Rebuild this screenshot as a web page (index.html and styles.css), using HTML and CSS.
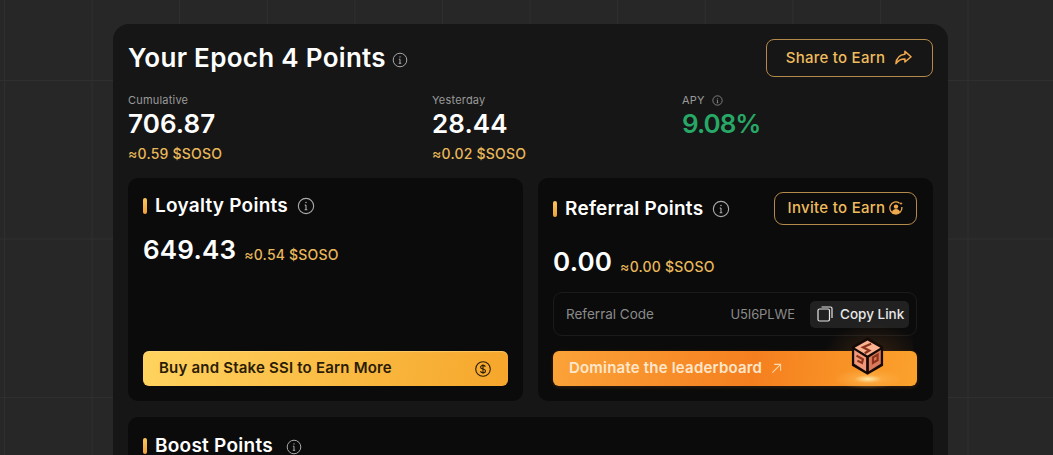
FILE: index.html
```html
<!DOCTYPE html>
<html lang="en">
<head>
<meta charset="utf-8">
<title>Epoch 4 Points</title>
<link rel="stylesheet" href="styles.css">
</head>
<body>
<main class="card">
  <header class="head">
    <div class="title-row">
      <h1 class="title">Your Epoch 4 Points</h1>
      <svg class="info info-16" viewBox="0 0 16 16"><circle cx="8" cy="8" r="6.800"/><path d="M8 7.200v4M6.800 11.300h2.400M6.900 7.200H8"/><circle class="dot" cx="8" cy="4.900" r=".7"/></svg>
    </div>
    <button class="btn-outline btn-share">Share to Earn
      <svg class="share-icon" viewBox="0 0 20 18"><path d="M11.500 2.500 18 8.200l-6.500 5.600v-3.200C7.500 10.400 4.500 12 2 15.500 2.500 10 6 6.200 11.500 5.600z"/></svg>
    </button>
  </header>

  <section class="stats">
    <div class="stat">
      <div class="stat-label">Cumulative</div>
      <div class="stat-value">706.87</div>
      <div class="soso">≈0.59 $SOSO</div>
    </div>
    <div class="stat">
      <div class="stat-label">Yesterday</div>
      <div class="stat-value">28.44</div>
      <div class="soso">≈0.02 $SOSO</div>
    </div>
    <div class="stat">
      <div class="stat-label">APY
        <svg class="info info-11" viewBox="0 0 16 16"><circle cx="8" cy="8" r="6.800"/><path d="M8 7.200v4M6.800 11.300h2.400M6.900 7.200H8"/><circle class="dot" cx="8" cy="4.900" r=".7"/></svg>
      </div>
      <div class="stat-value green">9.08%</div>
    </div>
  </section>

  <section class="panels">
    <article class="panel">
      <div class="panel-head panel-head-short">
        <span class="bar"></span>
        <h2 class="panel-title">Loyalty Points</h2>
        <svg class="info info-17" viewBox="0 0 16 16"><circle cx="8" cy="8" r="6.800"/><path d="M8 7.200v4M6.800 11.300h2.400M6.900 7.200H8"/><circle class="dot" cx="8" cy="4.900" r=".7"/></svg>
      </div>
      <div class="amount-row amount-loyalty">
        <span class="amount">649.43</span><span class="soso">≈0.54 $SOSO</span>
      </div>
      <button class="cta cta-yellow"><span class="cta-label">Buy and Stake SSI to Earn More</span>
        <svg class="coin" viewBox="0 0 18 18"><circle cx="9" cy="9" r="7.300"/><path d="M11.400 6.600C10.800 5.700 9.900 5.400 9 5.400c-1.300 0-2.400.6-2.400 1.800 0 2.500 4.900 1.200 4.900 3.700 0 1.200-1.200 1.800-2.500 1.800-1 0-2-.4-2.600-1.300M9 4.200v9.600"/></svg>
      </button>
    </article>

    <article class="panel panel-referral">
      <div class="panel-head panel-head-tall">
        <span class="bar"></span>
        <h2 class="panel-title">Referral Points</h2>
        <svg class="info info-17" viewBox="0 0 16 16"><circle cx="8" cy="8" r="6.800"/><path d="M8 7.200v4M6.800 11.300h2.400M6.900 7.200H8"/><circle class="dot" cx="8" cy="4.900" r=".7"/></svg>
        <button class="btn-outline btn-invite">Invite to Earn
          <svg class="invite-icon" viewBox="0 0 14 14"><path class="ring" d="M10.500 2.200A6 6 0 1 0 12.800 6"/><circle class="fill" cx="7" cy="5.600" r="2.200"/><path class="fill" d="M2.900 11c.6-2 2.300-3 4.100-3s3.500 1 4.100 3c-1 1.200-2.500 1.900-4.100 1.900S3.900 12.200 2.900 11z"/><path class="fill" d="M12 .8l.5 1.200 1.200.5-1.200.5-.5 1.200-.5-1.200-1.200-.5 1.200-.5z"/></svg>
        </button>
      </div>
      <div class="amount-row amount-referral">
        <span class="amount">0.00</span><span class="soso">≈0.00 $SOSO</span>
      </div>
      <div class="code-box">
        <span class="code-label">Referral Code</span>
        <span class="code-value">U5I6PLWE</span>
        <button class="copy">
          <svg class="copy-icon" viewBox="0 0 16 16"><rect x="1" y="3" width="11.500" height="12" rx="1.500"/><path d="M4.500 1h9a1.500 1.500 0 0 1 1.500 1.500V12"/></svg>
          Copy Link
        </button>
      </div>
      <div class="cta-wrap">
        <button class="cta cta-orange"><span class="cta-label">Dominate the leaderboard</span>
          <svg class="arrow" viewBox="0 0 12 12"><path d="M1.500 10.500 10.500 1.500M3.500 1.500h7v7"/></svg>
        </button>
        <span class="halo"></span>
        <span class="glow"></span>
        <svg class="cube" viewBox="0 0 36 42">
          <polygon class="cube-edge" points="18,0 35,10 35,31 18,41 1,31 1,10"/>
          <polygon class="cube-top" points="18,3.500 32,11.500 18,20 4,11.500"/>
          <polygon class="cube-left" points="3.500,14 16.500,22 16.500,37 3.500,29"/>
          <polygon class="cube-right" points="32.500,14 19.500,22 19.500,37 32.500,29"/>
          <path class="cube-mark" d="M22 7 13 11l7 3.500-5 3M6 20l7 4-1 4-5-2.500M24 22l5-3v6l-5 3z"/>
        </svg>
      </div>
    </article>
  </section>

  <section class="panel panel-wide">
    <div class="panel-head panel-head-short">
      <span class="bar"></span>
      <h2 class="panel-title">Boost Points</h2>
      <svg class="info info-16 boost-info" viewBox="0 0 16 16"><circle cx="8" cy="8" r="6.800"/><path d="M8 7.200v4M6.800 11.300h2.400M6.900 7.200H8"/><circle class="dot" cx="8" cy="4.900" r=".7"/></svg>
    </div>
  </section>
</main>
</body>
</html>
```

FILE: styles.css
```css
* { box-sizing: border-box; }

html, body { margin: 0; height: 455px; overflow: hidden; }

body {
  padding: 24px 105px 0 113px;
  background-color: #272727;
  background-image:
    linear-gradient(to right, #2f2f2f 1px, transparent 1px),
    linear-gradient(to bottom, #2f2f2f 1px, transparent 1px);
  background-size: 87.6px 158.5px;
  background-position: 4px 80px;
  font-family: Inter, "Liberation Sans", sans-serif;
  color: #fff;
}

.card {
  width: 835px;
  height: 431px;
  overflow: hidden;
  padding: 15px;
  background: #161616;
  border-radius: 16px 16px 0 0;
}

h1, h2 { margin: 0; }

button { font-family: inherit; cursor: pointer; }

.head {
  display: flex;
  justify-content: space-between;
  align-items: flex-start;
  height: 54px;
}

.title-row {
  display: flex;
  align-items: center;
  gap: 6px;
  height: 38px;
}

.title {
  font-size: 26px;
  line-height: 38px;
  font-weight: 600;
  letter-spacing: 0.3px;
}

.info {
  flex: none;
  fill: none;
  stroke: #a8a8a8;
  stroke-width: 1;
}
.info .dot { fill: #a8a8a8; stroke: none; }
.info-16 { width: 16px; height: 16px; margin-top: 3px; }
.info-17 { width: 18px; height: 18px; margin-left: 9px; }
.info-11 { width: 11px; height: 11px; margin-left: 4px; vertical-align: -2px; }
.boost-info { margin-left: 13px; margin-top: 1px; }

.btn-outline {
  display: flex;
  align-items: center;
  justify-content: center;
  padding: 0 0 2px;
  background: transparent;
  border: 1px solid #b5894a;
  color: #efbd5e;
  font-weight: 500;
}

.btn-share {
  width: 167px;
  height: 38px;
  gap: 9px;
  border-radius: 8px;
  font-size: 15px;
  letter-spacing: 0.25px;
}

.share-icon {
  width: 19px;
  height: 17px;
  fill: none;
  stroke: #f0a94d;
  stroke-width: 1.600;
  stroke-linejoin: round;
}

.stats {
  display: grid;
  grid-template-columns: 304px 250px 1fr;
  height: 85px;
}

.stat-label {
  font-size: 11px;
  line-height: 15px;
  color: #9a9a9a;
  letter-spacing: 0.2px;
}

.stat-value {
  font-size: 26px;
  line-height: 31px;
  font-weight: 600;
  letter-spacing: 0.1px;
}
.green { color: #27a866; letter-spacing: -1px; }

.soso {
  font-size: 14px;
  line-height: 20px;
  font-weight: 500;
  color: #e9b85a;
  margin-top: 5px;
  letter-spacing: 0.2px;
}

.panels {
  display: grid;
  grid-template-columns: 395px 395px;
  gap: 15px;
  height: 223px;
}

.panel {
  display: flex;
  flex-direction: column;
  background: #0b0b0b;
  border-radius: 10px;
  padding: 15px;
}

.panel-referral { padding-right: 16px; }

.panel-wide { margin-top: 16px; height: 120px; padding-top: 16px; }

.panel-head {
  display: flex;
  align-items: center;
}
.panel-head-short { height: 26px; }
.panel-head-tall { height: 33px; margin-top: -1px; }

.bar {
  width: 4px;
  height: 16px;
  margin-right: 8px;
  border-radius: 2px;
  background: linear-gradient(#f9c65b, #f0a03a);
}

.panel-title {
  font-size: 19px;
  line-height: 26px;
  font-weight: 600;
  letter-spacing: 0.25px;
}

.btn-invite {
  margin-left: auto;
  width: 143px;
  height: 33px;
  gap: 4px;
  border-radius: 9px;
  font-size: 15px;
  letter-spacing: 0.3px;
}

.invite-icon { width: 14px; height: 14px; }
.invite-icon .ring { fill: none; stroke: #f0a94d; stroke-width: 1.300; }
.invite-icon .fill { fill: #f0a94d; }

.amount-row {
  display: flex;
  align-items: flex-start;
  gap: 8px;
}
.amount-loyalty { margin-top: 15px; }
.amount-referral { margin-top: 21px; }
.amount-row .soso { margin-top: 11px; }

.amount {
  font-size: 26px;
  line-height: 32px;
  font-weight: 600;
  letter-spacing: 0.2px;
}

.cta {
  display: flex;
  align-items: center;
  width: 100%;
  height: 35px;
  padding: 0 16px;
  border: 0;
  border-radius: 6px;
  font-size: 15px;
  font-weight: 600;
  letter-spacing: 0.2px;
}

.cta-label { position: relative; top: -1px; }

.cta-yellow {
  margin-top: auto;
  justify-content: space-between;
  background: linear-gradient(100deg, #ffd35f, #f6a62b);
  color: #2a1c05;
  box-shadow: inset 0 1px 1px rgba(255, 225, 150, .5);
}

.coin {
  width: 18px;
  height: 18px;
  fill: none;
  stroke: #2a1c05;
  stroke-width: 1.100;
}

.code-box {
  display: flex;
  align-items: center;
  height: 44px;
  margin-top: 14px;
  padding: 0 7px 0 12px;
  border: 1px solid #1b1b1b;
  border-radius: 9px;
  font-size: 13.500px;
  color: #8a8a8a;
}

.code-value { margin-left: auto; margin-right: 15px; font-size: 13px; letter-spacing: -0.1px; }

.copy {
  display: flex;
  align-items: center;
  gap: 7px;
  width: 99px;
  height: 27px;
  padding: 0 0 0 7px;
  border: 0;
  border-radius: 5px;
  background: #212121;
  color: #e8e8e8;
  font-size: 13.500px;
  font-weight: 500;
  white-space: nowrap;
}

.copy-icon {
  flex: none;
  width: 16px;
  height: 16px;
  fill: none;
  stroke: #e8e8e8;
  stroke-width: 1.200;
}

.cta-wrap { position: relative; margin-top: 15px; }

.cta-orange {
  gap: 9px;
  background: linear-gradient(100deg, #fba338, #f57f1f 55%, #fba22c);
  color: #ffe7cc;
  box-shadow: 0 1px 4px rgba(255, 140, 40, .18);
}

.arrow {
  width: 11px;
  height: 11px;
  fill: none;
  stroke: #ffd9b0;
  stroke-width: 1.100;
}

.halo {
  position: absolute;
  left: 270px;
  top: -28px;
  width: 90px;
  height: 28px;
  background: radial-gradient(ellipse at 55% 100%, rgba(120, 70, 30, .35), transparent 70%);
}

.glow {
  position: absolute;
  left: 280px;
  top: 18px;
  width: 70px;
  height: 20px;
  border-radius: 50%;
  background: radial-gradient(closest-side, #ffe9a8, rgba(255, 190, 90, .4) 40%, transparent);
}

.cube {
  position: absolute;
  left: 298px;
  top: -14px;
  width: 33px;
  height: 39px;
}

.cube-edge { fill: #160a06; }
.cube-top { fill: #fbb192; }
.cube-left { fill: #f0987a; }
.cube-right { fill: #d97a5c; }
.cube-mark { fill: none; stroke: #8a3319; stroke-width: 2.400; }
```
